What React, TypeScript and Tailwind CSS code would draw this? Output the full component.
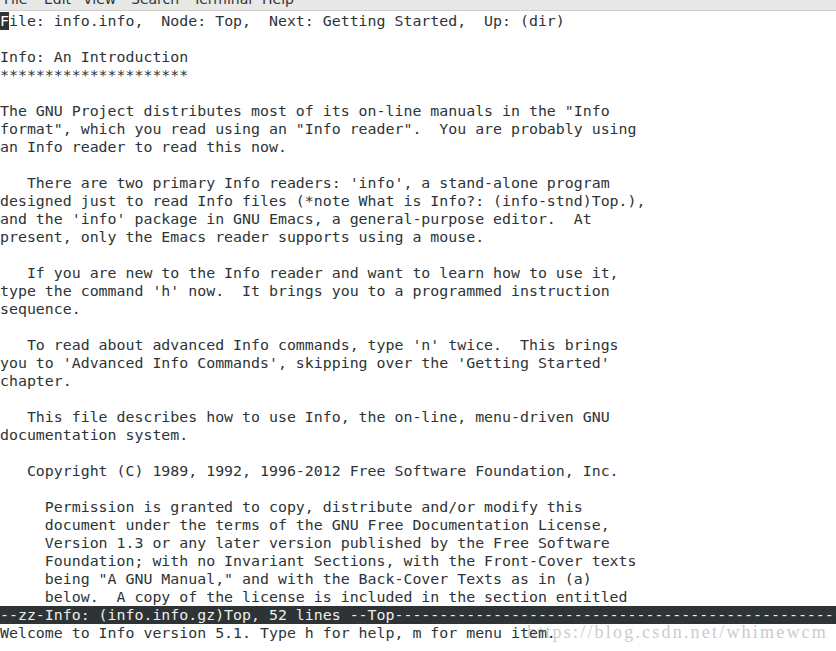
import React from 'react';

const lines: string[] = [
  '',
  '',
  'Info: An Introduction',
  '*********************',
  '',
  'The GNU Project distributes most of its on-line manuals in the "Info',
  'format", which you read using an "Info reader".  You are probably using',
  'an Info reader to read this now.',
  '',
  "   There are two primary Info readers: 'info', a stand-alone program",
  'designed just to read Info files (*note What is Info?: (info-stnd)Top.),',
  "and the 'info' package in GNU Emacs, a general-purpose editor.  At",
  'present, only the Emacs reader supports using a mouse.',
  '',
  '   If you are new to the Info reader and want to learn how to use it,',
  "type the command 'h' now.  It brings you to a programmed instruction",
  'sequence.',
  '',
  "   To read about advanced Info commands, type 'n' twice.  This brings",
  "you to 'Advanced Info Commands', skipping over the 'Getting Started'",
  'chapter.',
  '',
  '   This file describes how to use Info, the on-line, menu-driven GNU',
  'documentation system.',
  '',
  '   Copyright (C) 1989, 1992, 1996-2012 Free Software Foundation, Inc.',
  '',
  '     Permission is granted to copy, distribute and/or modify this',
  '     document under the terms of the GNU Free Documentation License,',
  '     Version 1.3 or any later version published by the Free Software',
  '     Foundation; with no Invariant Sections, with the Front-Cover texts',
  '     being "A GNU Manual," and with the Back-Cover Texts as in (a)',
  '     below.  A copy of the license is included in the section entitled',
];

const menu = [
  { label: 'File', w: 'w-[40px]' },
  { label: 'Edit', w: 'w-[39px]' },
  { label: 'View', w: 'w-[48px]' },
  { label: 'Search', w: 'w-[62px]' },
  { label: 'Terminal', w: 'w-[69px]' },
  { label: 'Help', w: 'w-[40px]' },
];

const App = () => {
  return (
    <div className="relative w-[836px] h-[651px] overflow-hidden bg-white">
      {/* Menu bar, mostly scrolled off the top */}
      <div className="h-[11px] mb-[1px] bg-[#e8e8e7] border-b border-[#cfcfcf] overflow-hidden">
        <div className="flex pl-[4px] -mt-[8px] text-[14px] leading-[14px] text-[#2e3436] font-['DejaVu_Sans',sans-serif]">
          {menu.map((m) => (
            <span key={m.label} className={m.w}>
              {m.label}
            </span>
          ))}
        </div>
      </div>

      {/* Watermark */}
      <div className="absolute left-[527px] top-[621px] text-[18px] leading-[22px] tracking-[2.2px] text-[#cccccc] font-['Liberation_Serif',serif] whitespace-nowrap">
        https://blog.csdn.net/whimewcm
      </div>

      {/* Terminal text */}
      <div className="relative font-['DejaVu_Sans_Mono',monospace] text-[14.9px] leading-[18px] text-[#2e3436] whitespace-pre">
        <div className="h-[18px]">
          <span className="bg-[#2e3436] text-white">F</span>
          ile: info.info,  Node: Top,  Next: Getting Started,  Up: (dir)
        </div>
        {lines.slice(1).map((l, i) => (
          <div key={i} className="h-[18px]">
            {l}
          </div>
        ))}
        <div className="h-[18px] bg-[#2e3436] text-[#eeeeec] overflow-hidden">
          --zz-Info: (info.info.gz)Top, 52 lines --Top------------------------------------------------------------------------
        </div>
        <div className="h-[18px]">Welcome to Info version 5.1. Type h for help, m for menu item.</div>
      </div>
    </div>
  );
};

export default App;
